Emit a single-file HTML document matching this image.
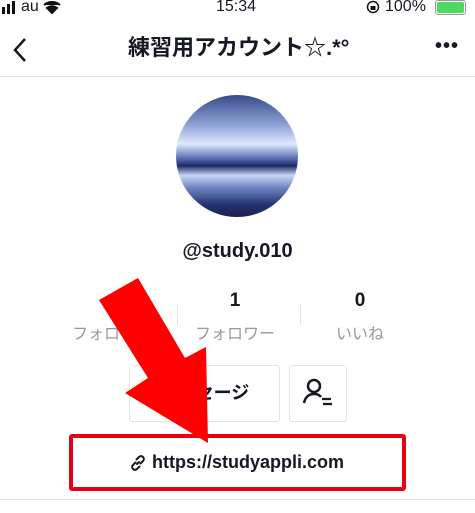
<!DOCTYPE html>
<html><head><meta charset="utf-8"><style>
body{margin:0;width:475px;height:513px;background:#fff;position:relative;overflow:hidden;font-family:"Liberation Sans","Noto Sans CJK JP",sans-serif;color:#161823}
.a{position:absolute}
</style></head><body>
<svg class="a" style="left:2px;top:1px" width="70" height="14"><rect x="0" y="6" width="3" height="7" fill="#111"/><rect x="5" y="3" width="3" height="10" fill="#111"/><rect x="10" y="0" width="3" height="13" fill="#111"/><path d="M50 12 L45 7 A8 8 0 0 1 55 7 Z M42 4 A12 12 0 0 1 58 4" fill="#111" stroke="#111" stroke-width="2"/></svg>
<div class="a" style="left:21px;top:-1px;font-size:16px;line-height:16px">au</div>
<div class="a" style="left:216px;top:-1px;font-size:16px;line-height:16px">15:34</div>
<svg class="a" style="left:366px;top:0" width="14" height="14"><circle cx="7" cy="7" r="5.5" stroke="#111" stroke-width="1.5" fill="none"/><rect x="4.5" y="6" width="5" height="4" fill="#111"/></svg>
<div class="a" style="left:385px;top:-1px;font-size:16px;line-height:16px">100%</div>
<div class="a" style="left:435px;top:0;width:27px;height:11px;border:1px solid #999;border-radius:3px;padding:1px"><div style="width:100%;height:100%;background:#4cd964;border-radius:2px"></div></div>
<svg class="a" style="left:10px;top:36px" width="20" height="28"><path d="M15 3 L5 14 L15 25" stroke="#161823" stroke-width="2.5" fill="none"/></svg>
<div class="a" style="left:128px;top:33px;font-size:22px;font-weight:bold;line-height:30px">練習用アカウント☆.*°</div>
<div class="a" style="left:435px;top:35px;font-size:20px;font-weight:bold;letter-spacing:1px">•••</div>
<div class="a" style="left:0;top:76px;width:475px;height:1px;background:#e3e3e4"></div>
<div class="a" style="left:176px;top:95px;width:122px;height:122px;border-radius:50%;overflow:hidden;background:linear-gradient(#3a4a8a 0%,#8fa4d8 25%,#dfe8ff 40%,#5a6db0 52%,#1e2a68 58%,#c8d6f5 66%,#6f84c4 76%,#253270 90%,#1a2050 100%)"></div>
<div class="a" style="left:0;top:240px;width:475px;text-align:center;font-size:20px;font-weight:bold">@study.010</div>
<div class="a" style="left:200px;top:290px;width:70px;text-align:center;font-size:19px;font-weight:bold">1</div>
<div class="a" style="left:325px;top:290px;width:70px;text-align:center;font-size:19px;font-weight:bold">0</div>
<div class="a" style="left:72px;top:320px;font-size:16px;color:#999">フォロー</div>
<div class="a" style="left:195px;top:320px;font-size:16px;color:#999">フォロワー</div>
<div class="a" style="left:336px;top:320px;font-size:16px;color:#999">いいね</div>
<div class="a" style="left:177px;top:305px;width:1px;height:20px;background:#e3e3e4"></div>
<div class="a" style="left:300px;top:305px;width:1px;height:20px;background:#e3e3e4"></div>
<div class="a" style="left:129px;top:365px;width:151px;height:57px;border:1px solid #e3e3e4;border-radius:3px;box-sizing:border-box;text-align:center;line-height:55px;font-size:18px;font-weight:bold">メッセージ</div>
<div class="a" style="left:289px;top:365px;width:58px;height:57px;border:1px solid #e3e3e4;border-radius:3px;box-sizing:border-box"></div>
<svg class="a" style="left:300px;top:375px" width="36" height="36"><circle cx="14" cy="11" r="6" stroke="#161823" stroke-width="2.5" fill="none"/><path d="M4 28 Q6 19 14 19 Q19 19 21 22" stroke="#161823" stroke-width="2.5" fill="none"/><path d="M22 24 H31 M23 29 H32" stroke="#161823" stroke-width="2.3"/></svg>
<div class="a" style="left:69px;top:434px;width:337px;height:57px;border:4px solid #e60012;border-radius:3px;box-sizing:border-box"></div>
<svg class="a" style="left:129px;top:454px" width="18" height="18"><path d="M8 10 L10 8 M6.5 8.5 L4 11 A2.8 2.8 0 0 0 8 15 L10.5 12.5 M11.5 9.5 L14 7 A2.8 2.8 0 0 0 10 3 L7.5 5.5" stroke="#161823" stroke-width="2" fill="none" stroke-linecap="round"/></svg>
<div class="a" style="left:152px;top:452px;font-size:18px;font-weight:bold">https://studyappli.com</div>
<div class="a" style="left:0;top:499px;width:475px;height:1px;background:#e3e3e4"></div>
<svg class="a" style="left:0;top:0" width="475" height="513"><polygon points="99,300 138,278 185,358 206,347 208,443 125,393 148,378" fill="#f00"/></svg>
</body></html>
